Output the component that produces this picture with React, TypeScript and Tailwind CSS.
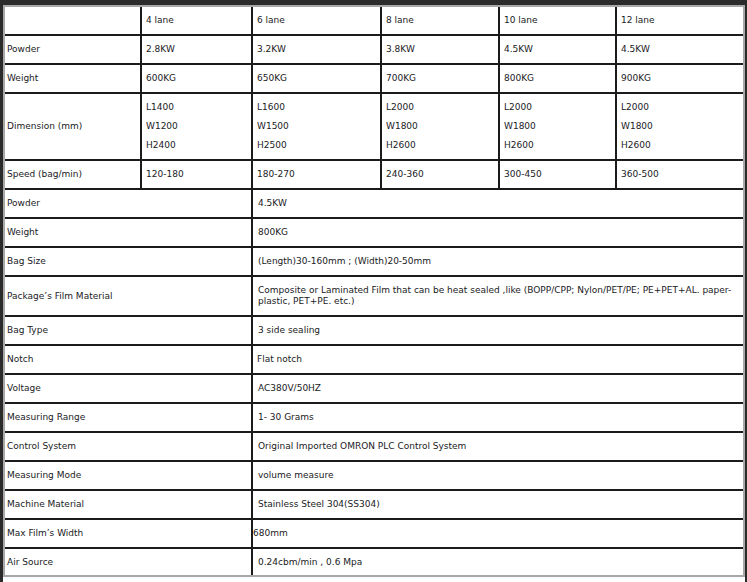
const lanes = ['4 lane', '6 lane', '8 lane', '10 lane', '12 lane'];

const laneRows = [
  { label: 'Powder', values: ['2.8KW', '3.2KW', '3.8KW', '4.5KW', '4.5KW'] },
  { label: 'Weight', values: ['600KG', '650KG', '700KG', '800KG', '900KG'] },
];

const dims = [
  ['L1400', 'W1200', 'H2400'],
  ['L1600', 'W1500', 'H2500'],
  ['L2000', 'W1800', 'H2600'],
  ['L2000', 'W1800', 'H2600'],
  ['L2000', 'W1800', 'H2600'],
];

const speeds = ['120-180', '180-270', '240-360', '300-450', '360-500'];

const specs: { label: string; value: React.ReactNode; pad?: string; h?: string }[] = [
  { label: 'Powder', value: '4.5KW' },
  { label: 'Weight', value: '800KG' },
  { label: 'Bag Size', value: '(Length)30-160mm ; (Width)20-50mm' },
  {
    label: 'Package\u2019s Film Material',
    value: (
      <>
        Composite or Laminated Film that can be heat sealed ,like (BOPP/CPP; Nylon/PET/PE; PE+PET+AL. paper-
        <br />
        plastic, PET+PE. etc.)
      </>
    ),
    h: 'h-[40px]',
  },
  { label: 'Bag Type', value: '3 side sealing' },
  { label: 'Notch', value: 'Flat notch', pad: 'pl-[4px]' },
  { label: 'Voltage', value: 'AC380V/50HZ' },
  { label: 'Measuring Range', value: '1- 30 Grams' },
  { label: 'Control System', value: 'Original Imported OMRON PLC Control System' },
  { label: 'Measuring Mode', value: 'volume measure' },
  { label: 'Machine Material', value: 'Stainless Steel 304(SS304)' },
  { label: 'Max Film\u2019s Width', value: '680mm', pad: 'pl-0' },
  { label: 'Air Source', value: '0.24cbm/min , 0.6 Mpa' },
];

const cell = 'border-b-2 border-r-2 border-[#1b1b1b] last:border-r-0 align-middle';

export default function App() {
  return (
    <div className="h-[582px] w-[747px] bg-[#2b2b2b] pl-[3px] pr-[2px] pt-[5px] overflow-hidden">
      <div className="h-full bg-white">
        <div className="border-2 border-[#a8a8a8]">
          <table
            className="w-full table-fixed border-separate border-spacing-0 text-[9px] leading-[11px] text-[#1a1a24]"
            style={{ fontFamily: '"DejaVu Sans", Verdana, sans-serif' }}
          >
            <colgroup>
              <col className="w-[137px]" />
              <col className="w-[111px]" />
              <col className="w-[129px]" />
              <col className="w-[118px]" />
              <col className="w-[117px]" />
              <col />
            </colgroup>
            <tbody>
              <tr className="h-[29px]">
                <td className={cell} />
                {lanes.map((l) => (
                  <td key={l} className={`${cell} pl-[4px]`}>{l}</td>
                ))}
              </tr>
              {laneRows.map((row) => (
                <tr key={row.label} className="h-[29px]">
                  <td className={`${cell} pl-[2px]`}>{row.label}</td>
                  {row.values.map((v, i) => (
                    <td key={i} className={`${cell} pl-[4px]`}>{v}</td>
                  ))}
                </tr>
              ))}
              <tr className="h-[67px]">
                <td className={`${cell} pl-[2px]`}>Dimension (mm)</td>
                {dims.map((d, i) => (
                  <td key={i} className={`${cell} pl-[4px]`}>
                    <div className="flex flex-col gap-[8px]">
                      {d.map((x) => (
                        <span key={x}>{x}</span>
                      ))}
                    </div>
                  </td>
                ))}
              </tr>
              <tr className="h-[29px]">
                <td className={`${cell} pl-[2px]`}>Speed (bag/min)</td>
                {speeds.map((s) => (
                  <td key={s} className={`${cell} pl-[4px]`}>{s}</td>
                ))}
              </tr>
              {specs.map((s, i) => (
                <tr
                  key={s.label}
                  className={`${s.h ?? (i === specs.length - 1 ? 'h-[26px]' : 'h-[29px]')} ${
                    i === specs.length - 1 ? '[&>td]:border-b-0' : ''
                  }`}
                >
                  <td colSpan={2} className={`${cell} pl-[2px]`}>{s.label}</td>
                  <td colSpan={4} className={`${cell} ${s.pad ?? 'pl-[5px]'}`}>{s.value}</td>
                </tr>
              ))}
            </tbody>
          </table>
        </div>
      </div>
    </div>
  );
}
